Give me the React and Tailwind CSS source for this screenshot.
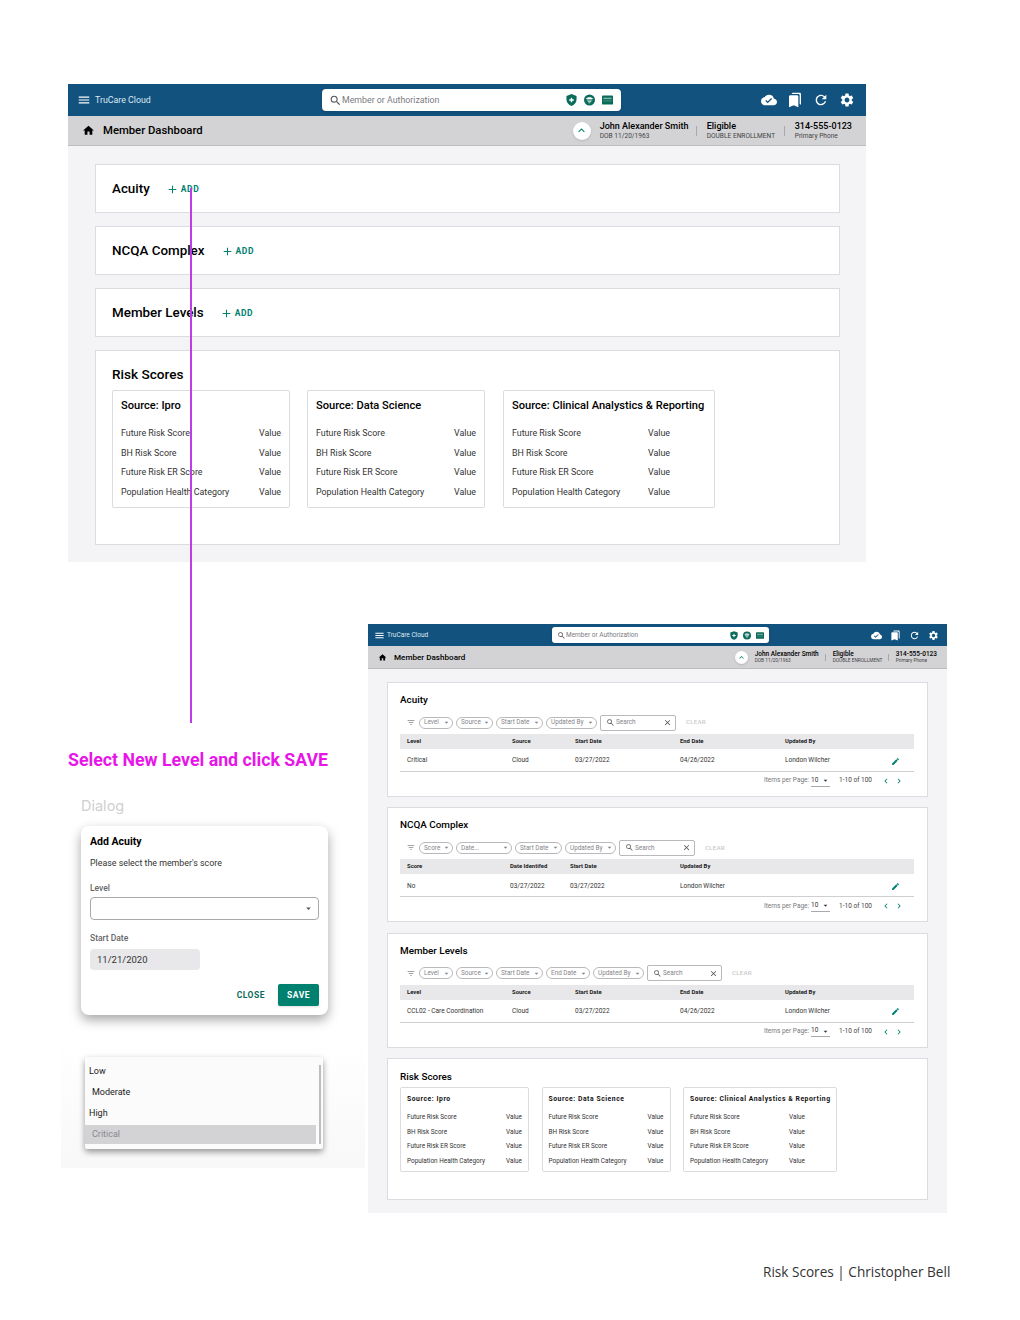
import React from 'react';
import {
  MdMenu, MdHome, MdCloudDone, MdBookmarks, MdRefresh, MdSettings, MdSearch, MdEdit,
  MdClose, MdArrowDropDown, MdChevronLeft, MdChevronRight, MdExpandLess, MdAdd, MdFilterList,
} from 'react-icons/md';

const big = {
  top: 'h-[32px] pl-[9px]',
  menu: 'text-[14px]',
  brand: 'ml-[4px] w-[227px] pt-[1px] text-[8.8px]',
  search: 'w-[299px] h-[22px] pl-[7px] pr-[8px] rounded-[4px] text-[8.8px]',
  searchIcon: 'text-[13px]',
  badges: 'gap-[7px]',
  badge: 'w-[11px] h-[12px]',
  right: 'gap-[10px] pr-[11px] text-[16px]',
  sub: 'h-[30px] pl-[14px] pr-[14px]',
  home: 'text-[13px]',
  title: 'ml-[8px] pt-[1px] text-[11.3px]',
  circle: 'w-[18px] h-[18px] mr-[9px] text-[13px]',
  name: 'w-[97px] text-[9px] leading-[11px]',
  eligible: 'w-[88px] pl-[10px] text-[9px] leading-[11px]',
  phone: 'pl-[10px] text-[9px] leading-[11px]',
  small: 'text-[6.6px] leading-[8px]',
  divider: 'h-[10px]',
};

const small = {
  top: 'h-[22px] pl-[6px]',
  menu: 'text-[11px]',
  brand: 'ml-[2px] w-[165px] pt-[1px] text-[6.5px]',
  search: 'w-[217px] h-[16px] pl-[5px] pr-[5px] rounded-[3px] text-[6.5px]',
  searchIcon: 'text-[9px]',
  badges: 'gap-[5px]',
  badge: 'w-[8px] h-[9px]',
  right: 'gap-[8px] pr-[8px] text-[11px]',
  sub: 'h-[23px] pl-[10px] pr-[10px]',
  home: 'text-[9px]',
  title: 'ml-[7px] pt-[1px] text-[8.1px]',
  circle: 'w-[13px] h-[13px] mr-[7px] text-[9px]',
  name: 'w-[71px] text-[6.5px] leading-[8px]',
  eligible: 'w-[63px] pl-[7px] text-[6.5px] leading-[8px]',
  phone: 'pl-[7px] text-[6.5px] leading-[8px]',
  small: 'text-[4.8px] leading-[6px]',
  divider: 'h-[7px]',
};

function ShieldIcon({ className }) {
  return (
    <svg viewBox="0 0 24 26" className={className}>
      <path d="M12 0 L23 4 V12 C23 19 18 24 12 26 C6 24 1 19 1 12 V4 Z" fill="#0b6b5a" />
      <path d="M12 8 V18 M7 13 H17" stroke="#fff" strokeWidth="3" />
    </svg>
  );
}

function GlobeIcon({ className }) {
  return (
    <svg viewBox="0 0 24 24" className={className}>
      <circle cx="12" cy="12" r="12" fill="#0b6b5a" />
      <path d="M4 10 C7 5 17 5 20 10 Z" fill="#fff" />
      <path d="M6 12 H18 M8 15 H16 M10 18 H14" stroke="#fff" strokeWidth="1.6" />
    </svg>
  );
}

function CardIcon({ className }) {
  return (
    <svg viewBox="0 0 24 20" className={className}>
      <rect width="24" height="20" rx="2" fill="#0b6b5a" />
      <rect x="3" y="5" width="18" height="3" fill="#7fb8a8" />
      <rect x="3" y="11" width="18" height="2" fill="#4f9a87" />
    </svg>
  );
}

function AppHeader({ s }) {
  return (
    <>
      <div className={`flex items-center bg-[#12527f] text-white ${s.top}`}>
        <MdMenu className={s.menu} />
        <div className={`text-[#dfe8ef] ${s.brand}`}>TruCare Cloud</div>
        <div className={`flex items-center bg-white text-[#7b7b7f] shadow-sm ${s.search}`}>
          <MdSearch className={`text-[#55555a] ${s.searchIcon}`} />
          <span className="pt-[1px]">Member or Authorization</span>
          <div className={`ml-auto flex items-center ${s.badges}`}>
            <ShieldIcon className={s.badge} />
            <GlobeIcon className={s.badge} />
            <CardIcon className={s.badge} />
          </div>
        </div>
        <div className={`flex flex-1 items-center justify-end ${s.right}`}>
          <MdCloudDone />
          <MdBookmarks />
          <MdRefresh />
          <MdSettings />
        </div>
      </div>
      <div className={`flex items-center border-b border-[#bcbcbf] bg-[#d3d3d5] text-black ${s.sub}`}>
        <MdHome className={s.home} />
        <div className={`font-medium ${s.title}`}>Member Dashboard</div>
        <div className="ml-auto flex items-center">
          <div className={`flex items-center justify-center rounded-full bg-white text-[#00806f] shadow ${s.circle}`}>
            <MdExpandLess />
          </div>
          <div className={`flex items-center justify-between font-medium ${s.name}`}>
            <div>
              <div className="whitespace-nowrap">John Alexander Smith</div>
              <div className={`font-normal text-[#444] ${s.small}`}>DOB 11/20/1963</div>
            </div>
            <div className={`w-px bg-[#a9a9ad] ${s.divider}`}></div>
          </div>
          <div className={`flex items-center justify-between font-medium ${s.eligible}`}>
            <div>
              <div>Eligible</div>
              <div className={`whitespace-nowrap font-normal text-[#444] ${s.small}`}>DOUBLE ENROLLMENT</div>
            </div>
            <div className={`w-px bg-[#a9a9ad] ${s.divider}`}></div>
          </div>
          <div className={`font-medium ${s.phone}`}>
            <div className="whitespace-nowrap">314-555-0123</div>
            <div className={`font-normal text-[#444] ${s.small}`}>Primary Phone</div>
          </div>
        </div>
      </div>
    </>
  );
}

function AddCard({ title }) {
  return (
    <div className="flex h-[49px] items-center border border-[#dcdce0] bg-white pl-[16px]">
      <div className="pt-[1px] text-[13.4px] font-medium text-black">{title}</div>
      <div className="ml-[16px] flex items-center pt-[1px] text-[#00806f]">
        <MdAdd className="text-[13px]" />
        <span className="ml-[2px] text-[8.5px] font-bold tracking-[0.6px]">ADD</span>
      </div>
    </div>
  );
}

const riskRows = ['Future Risk Score', 'BH Risk Score', 'Future Risk ER Score', 'Population Health Category'];

function BigSource({ title, width, labelWidth }) {
  return (
    <div className={`h-[118px] rounded-[2px] border border-[#dcdce0] pl-[8px] pt-[8px] ${width}`}>
      <div className="whitespace-nowrap text-[11.1px] font-medium leading-[14px] text-black">{title}</div>
      <div className="mt-[15px] flex flex-col gap-[8.6px]">
        {riskRows.map((r) => (
          <div key={r} className="flex text-[8.9px] leading-[11px] text-[#333]">
            <span className={`whitespace-nowrap ${labelWidth}`}>{r}</span>
            <span>Value</span>
          </div>
        ))}
      </div>
    </div>
  );
}

function BigBoard() {
  return (
    <div className="absolute left-[68px] top-[84px] h-[478px] w-[798px] bg-[#f4f4f6]">
      <AppHeader s={big} />
      <div className="flex flex-col gap-[13px] pl-[27px] pr-[26px] pt-[18px]">
        <AddCard title="Acuity" />
        <AddCard title="NCQA Complex" />
        <AddCard title="Member Levels" />
        <div className="h-[195px] border border-[#dcdce0] bg-white pl-[16px] pt-[14px]">
          <div className="text-[13.6px] font-medium leading-[18px] text-black">Risk Scores</div>
          <div className="mt-[7px] flex gap-[17px]">
            <BigSource title="Source: Ipro" width="w-[178px]" labelWidth="w-[138px]" />
            <BigSource title="Source: Data Science" width="w-[178px]" labelWidth="w-[138px]" />
            <BigSource title="Source: Clinical Analystics & Reporting" width="ml-[1px] w-[212px]" labelWidth="w-[136px]" />
          </div>
        </div>
      </div>
    </div>
  );
}

function Chip({ label, width }) {
  return (
    <div className={`flex h-[12px] items-center justify-between rounded-full border border-[#b9b9bd] pl-[4px] pr-[1px] text-[6.4px] text-[#85858a] ${width}`}>
      <span className="whitespace-nowrap pt-[1px]">{label}</span>
      <MdArrowDropDown className="text-[9px]" />
    </div>
  );
}

function DataCard({ title, chips, searchWidth, cols, headers, cells }) {
  return (
    <div className="h-[115px] border border-[#dcdce0] bg-white pl-[12px] pr-[13px] pt-[10px]">
      <div className="text-[9.9px] font-medium leading-[13px] text-black">{title}</div>
      <div className="mt-[8px] flex h-[17px] items-center gap-[3px] pl-[6px]">
        <MdFilterList className="w-[10px] text-[9px] text-[#85858a]" />
        {chips.map((c) => (
          <Chip key={c[0]} label={c[0]} width={c[1]} />
        ))}
        <div className={`flex h-[16px] items-center rounded-[2px] border border-[#b9b9bd] pl-[5px] pr-[3px] text-[6.4px] text-[#85858a] ${searchWidth}`}>
          <MdSearch className="text-[9px] text-[#55555a]" />
          <span className="ml-[1px] pt-[1px]">Search</span>
          <MdClose className="ml-auto text-[9px] text-[#55555a]" />
        </div>
        <span className="ml-[7px] pt-[1px] text-[6.2px] font-medium tracking-[0.2px] text-[#c9c9cc]">CLEAR</span>
      </div>
      <div className={`mt-[3px] grid h-[15px] items-center bg-[#e8e8ea] pl-[7px] text-[5.9px] font-bold text-[#222] ${cols}`}>
        {headers.map((h) => (
          <span key={h} className="whitespace-nowrap">{h}</span>
        ))}
      </div>
      <div className={`grid h-[23px] items-center border-b border-[#cfcfd2] pl-[7px] pr-[14px] pt-[2px] text-[6.5px] text-[#333] ${cols}`}>
        {cells.map((c) => (
          <span key={c} className="whitespace-nowrap">{c}</span>
        ))}
        <MdEdit className="ml-auto text-[9px] text-[#00806f]" />
      </div>
      <div className="flex h-[18px] items-center justify-end pr-[10px] text-[6.5px] text-[#77777c]">
        <span>Items per Page:</span>
        <div className="ml-[2px] flex h-[11px] w-[19px] items-center justify-between border-b border-[#a9a9ad] text-[#333]">
          <span>10</span>
          <MdArrowDropDown className="text-[9px]" />
        </div>
        <span className="ml-[9px] text-[#444]">1-10 of 100</span>
        <MdChevronLeft className="ml-[9px] text-[10px] text-[#00806f]" />
        <MdChevronRight className="ml-[3px] text-[10px] text-[#00806f]" />
      </div>
    </div>
  );
}

function SmallSource({ title, width }) {
  return (
    <div className={`h-[85px] rounded-[2px] border border-[#dcdce0] pl-[6px] pt-[7px] ${width}`}>
      <div className="whitespace-nowrap text-[6.8px] font-bold leading-[9px] tracking-[0.55px] text-[#111]">{title}</div>
      <div className="mt-[9px] flex flex-col gap-[6.6px]">
        {riskRows.map((r) => (
          <div key={r} className="flex text-[6.4px] leading-[8px] text-[#333]">
            <span className="w-[99px] whitespace-nowrap">{r}</span>
            <span>Value</span>
          </div>
        ))}
      </div>
    </div>
  );
}

function SmallBoard() {
  return (
    <div className="absolute left-[368px] top-[624px] h-[589px] w-[579px] bg-[#f4f4f6]">
      <AppHeader s={small} />
      <div className="flex flex-col gap-[10.4px] pl-[19px] pr-[19px] pt-[13px]">
        <DataCard
          title="Acuity"
          chips={[['Level', 'w-[34px]'], ['Source', 'w-[37px]'], ['Start Date', 'w-[47px]'], ['Updated By', 'w-[51px]']]}
          searchWidth="w-[76px]"
          cols="grid-cols-[105px_63px_105px_105px_1fr_auto]"
          headers={['Level', 'Source', 'Start Date', 'End Date', 'Updated By']}
          cells={['Critical', 'Cloud', '03/27/2022', '04/26/2022', 'London Wilcher']}
        />
        <DataCard
          title="NCQA Complex"
          chips={[['Score', 'w-[34px]'], ['Date...', 'w-[56px]'], ['Start Date', 'w-[47px]'], ['Updated By', 'w-[51px]']]}
          searchWidth="w-[76px]"
          cols="grid-cols-[103px_60px_110px_1fr_auto]"
          headers={['Score', 'Date Identifed', 'Start Date', 'Updated By']}
          cells={['No', '03/27/2022', '03/27/2022', 'London Wilcher']}
        />
        <DataCard
          title="Member Levels"
          chips={[['Level', 'w-[34px]'], ['Source', 'w-[37px]'], ['Start Date', 'w-[47px]'], ['End Date', 'w-[44px]'], ['Updated By', 'w-[51px]']]}
          searchWidth="w-[75px]"
          cols="grid-cols-[105px_63px_105px_105px_1fr_auto]"
          headers={['Level', 'Source', 'Start Date', 'End Date', 'Updated By']}
          cells={['CCL02 - Care Coordination', 'Cloud', '03/27/2022', '04/26/2022', 'London Wilcher']}
        />
        <div className="h-[142px] border border-[#dcdce0] bg-white pl-[12px] pt-[11px]">
          <div className="text-[9.9px] font-medium leading-[13px] text-black">Risk Scores</div>
          <div className="mt-[4px] flex gap-[12.5px]">
            <SmallSource title="Source: Ipro" width="w-[129px]" />
            <SmallSource title="Source: Data Science" width="w-[129px]" />
            <SmallSource title="Source: Clinical Analystics & Reporting" width="w-[154px]" />
          </div>
        </div>
      </div>
    </div>
  );
}

function AddDialog() {
  return (
    <div className="absolute left-[81px] top-[826px] h-[189px] w-[247px] rounded-[8px] bg-white pl-[9px] pr-[9px] pt-[9px] shadow-[0_5px_12px_rgba(0,0,0,0.35)]">
      <div className="text-[10.5px] font-bold leading-[13px] text-black">Add Acuity</div>
      <div className="mt-[9px] text-[8.85px] leading-[12px] text-[#333]">Please select the member's score</div>
      <div className="mt-[14px] text-[8.5px] font-medium leading-[11px] text-[#666]">Level</div>
      <div className="mt-[3px] flex h-[23px] items-center justify-end rounded-[4px] border border-[#a9a9ad] pr-[4px]">
        <MdArrowDropDown className="text-[11px] text-[#55555a]" />
      </div>
      <div className="mt-[13px] text-[8.5px] font-medium leading-[11px] text-[#666]">Start Date</div>
      <div className="mt-[5px] flex h-[21px] w-[110px] items-center rounded-[4px] bg-[#e8e8ea] pl-[7px] pt-[1px] text-[9.5px] text-[#333]">11/21/2020</div>
      <div className="mt-[14px] flex items-center justify-end">
        <span className="mr-[13px] text-[8.5px] font-bold tracking-[0.5px] text-[#0b6b5a]">CLOSE</span>
        <div className="flex h-[22px] w-[41px] items-center justify-center rounded-[2px] bg-[#00806f] text-[8.5px] font-bold tracking-[0.5px] text-white shadow">SAVE</div>
      </div>
    </div>
  );
}

function LevelList() {
  return (
    <>
      <div className="absolute left-[61px] top-[1040px] h-[128px] w-[304px] bg-gradient-to-b from-white to-[#f8f8f9]"></div>
      <div className="absolute left-[85px] top-[1057px] h-[92px] w-[238px] rounded-[2px] bg-[#fbfbfb] shadow-[0_3px_6px_rgba(0,0,0,0.4)]">
        <div className="flex h-[87px] flex-col pr-[7px] pt-[4px] text-[9px] text-[#222]">
          <div className="flex h-[21px] items-center pl-[4px] pt-[1px]">Low</div>
          <div className="flex h-[21px] items-center pl-[7px]">Moderate</div>
          <div className="flex h-[21px] items-center pl-[4px] pt-[1px]">High</div>
          <div className="mt-[1px] flex h-[19px] items-center bg-[#d3d3d5] pl-[7px] text-[#88888c]">Critical</div>
        </div>
        <div className="absolute right-[2px] top-[8px] h-[79px] w-[2px] bg-[#bdbdc0]"></div>
      </div>
    </>
  );
}

export default function App() {
  return (
    <div className="relative h-[1320px] w-[1020px] overflow-hidden bg-white font-['Roboto',sans-serif]">
      <BigBoard />
      <SmallBoard />

      <div className="absolute left-[68px] top-[749px] text-[17.75px] font-bold leading-[22px] text-[#e815e8]">
        Select New Level and click SAVE
      </div>
      <div className="absolute left-[81px] top-[797px] font-['Inter',sans-serif] text-[14.5px] leading-[18px] text-[#cfcfd1]">
        Dialog
      </div>
      <LevelList />
      <AddDialog />

      <div className="absolute left-[763px] top-[1263px] font-['Open_Sans',sans-serif] text-[13.6px] leading-[18px] text-[#333]">
        Risk Scores | Christopher Bell
      </div>

      {/* connector from the ADD action down to the dialog */}
      <div className="absolute left-[189.5px] top-[188px] h-[535px] w-[2px] bg-[#bd3ee6]"></div>
    </div>
  );
}
